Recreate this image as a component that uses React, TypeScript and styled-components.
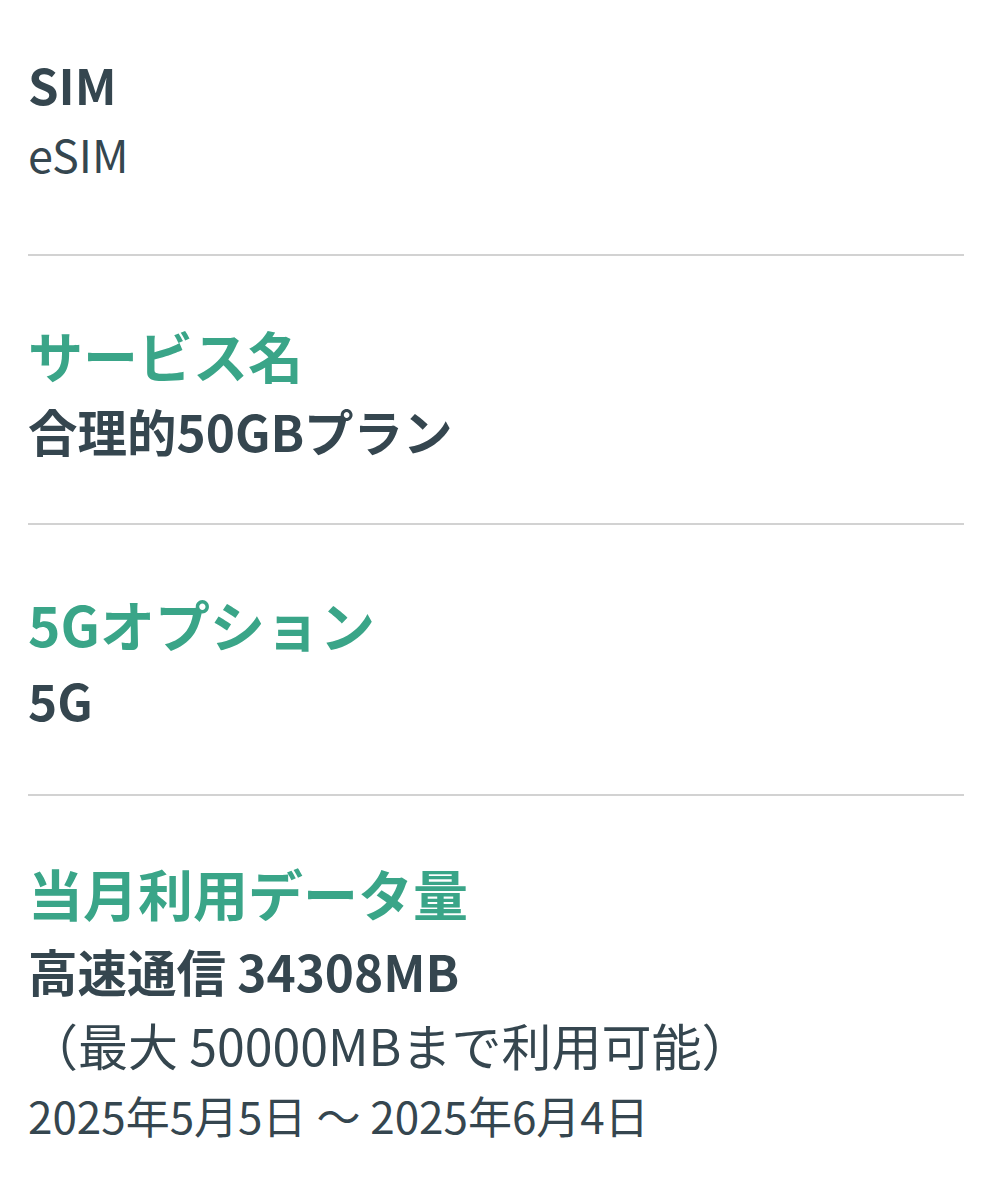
import React from "react";
import styled, { createGlobalStyle } from "styled-components";

const Global = createGlobalStyle`
  html, body { margin: 0; padding: 0; background: #ffffff; }
  body { font-family: "Noto Sans CJK JP", "Noto Sans", sans-serif; color: #35464f; }
`;

const Page = styled.main`
  padding: 0 28px;
  display: flex;
  flex-direction: column;
`;

const Section = styled.section<{ $top: number; $bottom: number; $last?: boolean }>`
  padding-top: ${(p) => p.$top}px;
  padding-bottom: ${(p) => p.$bottom}px;
  border-bottom: ${(p) => (p.$last ? "none" : "2px solid #d2d2d2")};
  display: flex;
  flex-direction: column;
`;

const Label = styled.h2<{ $accent?: boolean; $size?: number }>`
  margin: 0;
  font-size: ${(p) => p.$size ?? 55}px;
  line-height: 74px;
  font-weight: 700;
  color: ${(p) => (p.$accent ? "#3aa588" : "#35464f")};
`;

const Value = styled.p<{ $bold?: boolean; $gap?: number; $size?: number }>`
  margin: ${(p) => p.$gap ?? 4}px 0 0;
  font-size: ${(p) => p.$size ?? 49.5}px;
  line-height: 72px;
  font-weight: ${(p) => (p.$bold ? 700 : 400)};
  color: #35464f;
`;

export default function App() {
  return (
    <>
      <Global />
      <Page>
        <Section $top={47} $bottom={64}>
          <Label $size={49}>SIM</Label>
          <Value $gap={-3} $size={45}>eSIM</Value>
        </Section>
        <Section $top={61} $bottom={56}>
          <Label $accent>サービス名</Label>
          <Value $bold>合理的50GBプラン</Value>
        </Section>
        <Section $top={61} $bottom={58}>
          <Label $accent>5Gオプション</Label>
          <Value $bold>5G</Value>
        </Section>
        <Section $top={59} $bottom={40} $last>
          <Label $accent>当月利用データ量</Label>
          <Value $bold $gap={6}>高速通信 34308MB</Value>
          <Value $gap={1} $size={50}>（最大 50000MBまで利用可能）</Value>
          <Value $gap={-1} $size={44}>2025年5月5日 〜 2025年6月4日</Value>
        </Section>
      </Page>
    </>
  );
}
